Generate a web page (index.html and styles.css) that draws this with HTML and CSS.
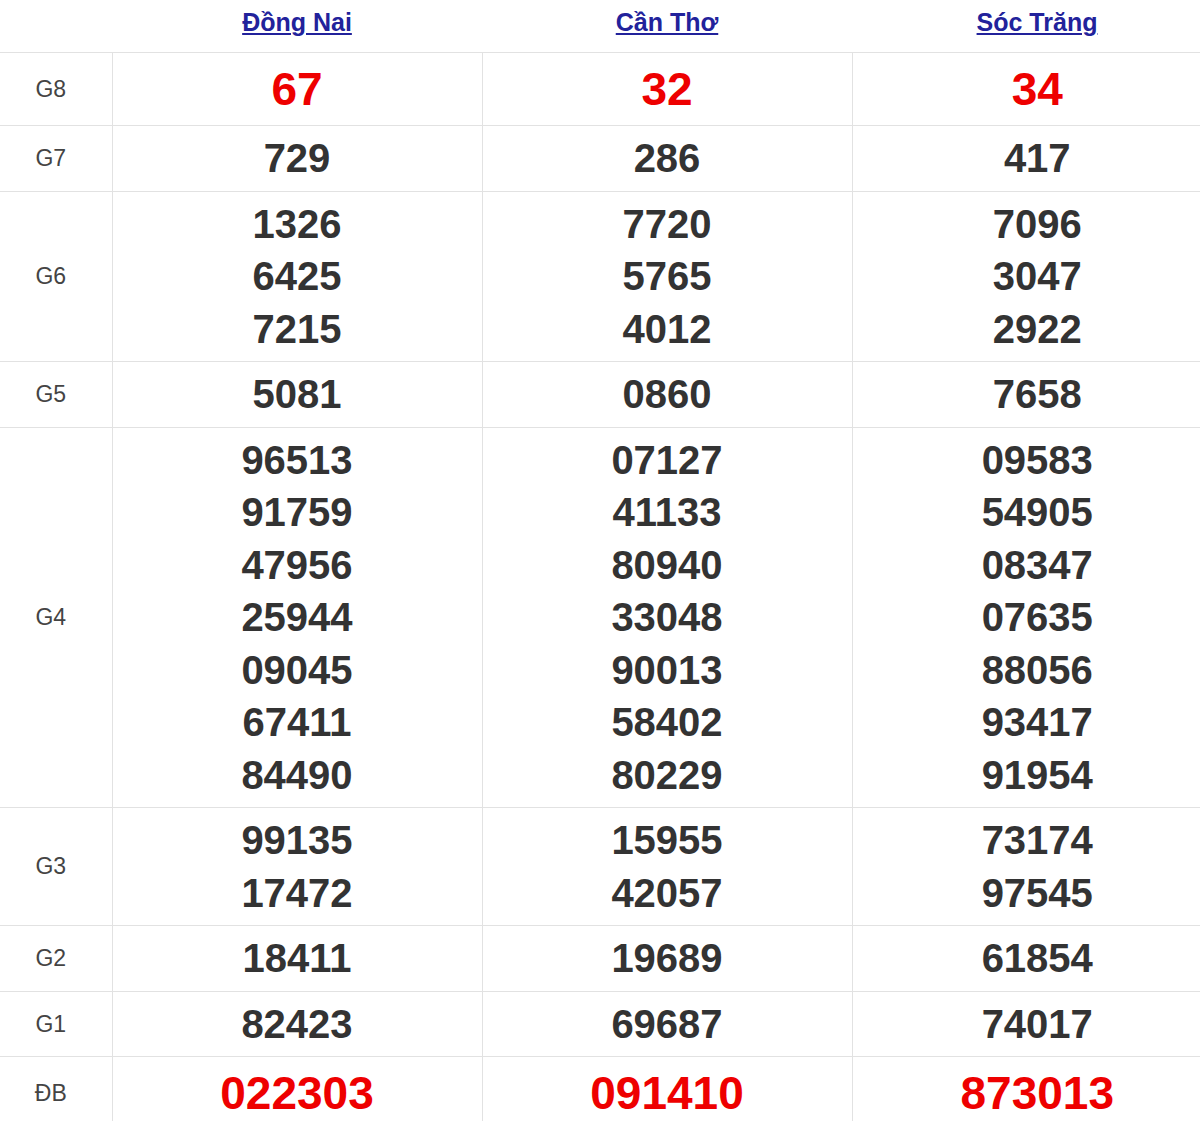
FILE: index.html
```html
<!DOCTYPE html>
<html lang="vi">
<head>
<meta charset="utf-8">
<title>Kết quả xổ số</title>
<link rel="stylesheet" href="styles.css">
</head>
<body>
<table class="kq">
  <colgroup>
    <col class="c-label">
    <col class="c-prov">
    <col class="c-prov">
    <col class="c-prov">
  </colgroup>
  <thead>
    <tr>
      <th class="h-empty"></th>
      <th><a href="#">Đồng Nai</a></th>
      <th><a href="#">Cần Thơ</a></th>
      <th><a href="#">Sóc Trăng</a></th>
    </tr>
  </thead>
  <tbody>
    <tr class="big">
      <td class="lbl">G8</td>
      <td class="red">67</td>
      <td class="red">32</td>
      <td class="red">34</td>
    </tr>
    <tr>
      <td class="lbl">G7</td>
      <td>729</td>
      <td>286</td>
      <td>417</td>
    </tr>
    <tr>
      <td class="lbl">G6</td>
      <td>1326<br>6425<br>7215</td>
      <td>7720<br>5765<br>4012</td>
      <td>7096<br>3047<br>2922</td>
    </tr>
    <tr>
      <td class="lbl">G5</td>
      <td>5081</td>
      <td>0860</td>
      <td>7658</td>
    </tr>
    <tr>
      <td class="lbl">G4</td>
      <td>96513<br>91759<br>47956<br>25944<br>09045<br>67411<br>84490</td>
      <td>07127<br>41133<br>80940<br>33048<br>90013<br>58402<br>80229</td>
      <td>09583<br>54905<br>08347<br>07635<br>88056<br>93417<br>91954</td>
    </tr>
    <tr>
      <td class="lbl">G3</td>
      <td>99135<br>17472</td>
      <td>15955<br>42057</td>
      <td>73174<br>97545</td>
    </tr>
    <tr>
      <td class="lbl">G2</td>
      <td>18411</td>
      <td>19689</td>
      <td>61854</td>
    </tr>
    <tr>
      <td class="lbl">G1</td>
      <td>82423</td>
      <td>69687</td>
      <td>74017</td>
    </tr>
    <tr class="big">
      <td class="lbl">ĐB</td>
      <td class="red">022303</td>
      <td class="red">091410</td>
      <td class="red">873013</td>
    </tr>
  </tbody>
</table>
</body>
</html>
```

FILE: styles.css
```css
html, body {
  margin: 0;
  padding: 0;
  background: #fff;
  overflow: hidden;
}

body {
  font-family: "Liberation Sans", Arial, sans-serif;
  color: #333;
}

.kq {
  border-collapse: collapse;
  table-layout: fixed;
  width: 1222px;
}

.c-label {
  width: 112px;
}

.c-prov {
  width: 370px;
}

.kq th {
  height: 44px;
  padding: 0 0 8px;
  border-bottom: 1px solid #e2e2e2;
  text-align: center;
  vertical-align: middle;
  font-size: 25px;
  line-height: 30px;
  font-weight: bold;
}

.kq th a {
  color: #22229b;
  text-decoration: underline;
  text-decoration-thickness: 2px;
  text-underline-offset: 2px;
}

.kq td {
  padding: 6px 0;
  border-bottom: 1px solid #e2e2e2;
  border-left: 1px solid #e2e2e2;
  text-align: center;
  vertical-align: middle;
  font-size: 40px;
  line-height: 52.5px;
  font-weight: bold;
  color: #333;
}

.kq td.lbl {
  border-left: none;
  padding-right: 10px;
  font-size: 23px;
  font-weight: normal;
  color: #444;
}

.kq tr.big td {
  line-height: 60px;
}

.kq td.red {
  color: #ee0000;
  font-size: 46px;
}
```
